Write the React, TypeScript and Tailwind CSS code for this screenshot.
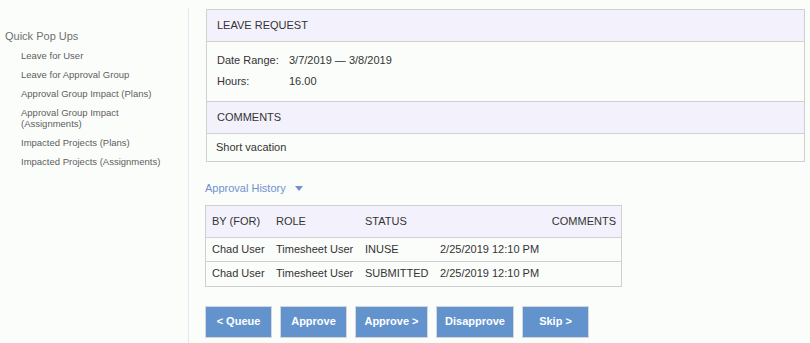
const links = [
  "Leave for User",
  "Leave for Approval Group",
  "Approval Group Impact (Plans)",
  "Approval Group Impact (Assignments)",
  "Impacted Projects (Plans)",
  "Impacted Projects (Assignments)",
];

const history = [
  { by: "Chad User", role: "Timesheet User", status: "INUSE", date: "2/25/2019 12:10 PM" },
  { by: "Chad User", role: "Timesheet User", status: "SUBMITTED", date: "2/25/2019 12:10 PM" },
];

const buttons = [
  { label: "< Queue", width: "w-[67px]" },
  { label: "Approve", width: "w-[67px]" },
  { label: "Approve >", width: "w-[73px]" },
  { label: "Disapprove", width: "w-[78px]" },
  { label: "Skip >", width: "w-[67px]" },
];

export default function App() {
  return (
    <div className="flex h-[343px] w-[810px] overflow-hidden bg-[#fbfdfb] font-['Liberation_Sans',Arial,sans-serif] text-[11px] text-[#333]">
      <aside className="mt-[8px] w-[189px] shrink-0 border-r border-[#e3e6f3]">
        <h2 className="mt-[22px] pl-[5px] text-[11px] leading-[13px] text-[#707070]">
          Quick Pop Ups
        </h2>
        <ul className="mt-[7px] flex flex-col gap-[8px] pl-[21px] pr-[18px]">
          {links.map((link) => (
            <li key={link} className="text-[9.5px] leading-[11px] text-[#5e5e5e]">
              {link}
            </li>
          ))}
        </ul>
      </aside>

      <main className="flex-1 pl-[17px] pr-[5px] pt-[9px]">
        <section className="border border-[#d0d0d0]">
          <div className="flex h-[32px] items-center border-b border-[#d0d0d0] bg-[#f3f2fc] pl-[10px]">
            LEAVE REQUEST
          </div>
          <div className="border-b border-[#d0d0d0] pb-[9px] pl-[10px] pt-[8px]">
            <div className="flex h-[21px] items-center">
              <span className="w-[72px]">Date Range:</span>
              <span>3/7/2019 — 3/8/2019</span>
            </div>
            <div className="flex h-[21px] items-center">
              <span className="w-[72px]">Hours:</span>
              <span>16.00</span>
            </div>
          </div>
          <div className="flex h-[32px] items-center border-b border-[#d0d0d0] bg-[#f3f2fc] pl-[10px]">
            COMMENTS
          </div>
          <div className="flex h-[27px] items-center pl-[9px]">Short vacation</div>
        </section>

        <div className="-ml-[1px] mt-[18px] flex items-center gap-[9px] text-[#7190d0]">
          <span>Approval History</span>
          <svg width="8" height="5" viewBox="0 0 8 5" className="mt-[1px]">
            <path d="M0 0h8L4 5z" fill="currentColor" />
          </svg>
        </div>

        <div className="-ml-[1px] mt-[8px] w-[417px] border border-[#d0d0d0]">
          <div className="flex h-[32px] items-center border-b border-[#d0d0d0] bg-[#f3f2fc] pl-[6px] pr-[5px]">
            <span className="w-[64px]">BY (FOR)</span>
            <span className="w-[89px]">ROLE</span>
            <span className="w-[75px]">STATUS</span>
            <span className="flex-1 text-right">COMMENTS</span>
          </div>
          {history.map((row, i) => (
            <div
              key={row.status}
              className={`flex h-[24px] items-center pl-[6px] pr-[5px] ${i === 0 ? "border-b border-[#d0d0d0]" : ""}`}
            >
              <span className="w-[64px]">{row.by}</span>
              <span className="w-[89px]">{row.role}</span>
              <span className="w-[75px]">{row.status}</span>
              <span>{row.date}</span>
            </div>
          ))}
        </div>

        <div className="-ml-[1px] mt-[19px] flex gap-[8px]">
          {buttons.map((b) => (
            <button
              key={b.label}
              type="button"
              className={`${b.width} h-[32px] border border-[#d3d6dc] bg-[#6393cd] text-[11px] font-bold text-white`}
            >
              {b.label}
            </button>
          ))}
        </div>
      </main>
    </div>
  );
}
